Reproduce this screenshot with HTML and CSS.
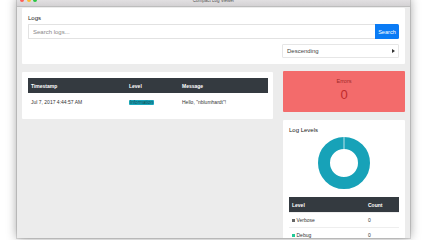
FILE: index.html
```html
<!DOCTYPE html>
<html>
<head>
<meta charset="utf-8">
<link rel="stylesheet" href="styles.css">
</head>
<body>
<div class="window">
  <div class="titlebar">
    <div class="lights"><span class="light red"></span><span class="light yellow"></span><span class="light green"></span></div>
    <div class="title">Compact Log Viewer</div>
  </div>
  <div class="content">
    <section class="card search-card">
      <h1 class="card-title">Logs</h1>
      <div class="search-row">
        <input class="search-input" type="text" placeholder="Search logs...">
        <button class="search-btn">Search</button>
      </div>
      <div class="sort-row">
        <div class="select"><span>Descending</span>
          <svg class="caret" width="3" height="4" viewBox="0 0 3 4"><path d="M0 0 L3 2 L0 4 Z" fill="#333"/></svg>
        </div>
      </div>
    </section>
    <div class="grid">
      <div class="col-main">
        <section class="card logs-card">
          <table class="table">
            <thead><tr><th class="c-ts">Timestamp</th><th class="c-lv">Level</th><th>Message</th></tr></thead>
            <tbody><tr><td>Jul 7, 2017 4:44:57 AM</td><td><span class="badge">Information</span></td><td>Hello, "nblumhardt"!</td></tr></tbody>
          </table>
        </section>
      </div>
      <div class="col-side">
        <section class="card errors-card">
          <div class="errors-label">Errors</div>
          <div class="errors-count">0</div>
        </section>
        <section class="card levels-card">
          <h2 class="card-title">Log Levels</h2>
          <div class="donut-wrap">
            <svg width="52" height="52" viewBox="0 0 52 52">
              <circle cx="26" cy="26" r="20" fill="none" stroke="#17a2b8" stroke-width="12"/>
              <line x1="26" y1="0" x2="26" y2="12" stroke="#fff" stroke-width="0.7"/>
            </svg>
          </div>
          <table class="table levels">
            <thead><tr><th class="c-level">Level</th><th>Count</th></tr></thead>
            <tbody>
              <tr><td><span class="sw sw-verbose"></span>Verbose</td><td>0</td></tr>
              <tr><td><span class="sw sw-debug"></span>Debug</td><td>0</td></tr>
            </tbody>
          </table>
        </section>
      </div>
    </div>
  </div>
</div>
</body>
</html>
```
FILE: styles.css
```css
html, body {
  margin: 0;
  padding: 0;
  background: #ffffff;
  overflow: hidden;
  width: 427px;
  height: 240px;
}
body {
  font-family: "Liberation Sans", Arial, sans-serif;
  color: #333;
}
.window {
  margin: -2px 0 0 17px;
  width: 393px;
  height: 240px;
  background: #ececec;
  box-shadow: 0 0 10px rgba(0,0,0,0.38), 0 0 0 1px rgba(0,0,0,0.12);
  overflow: hidden;
  display: flex;
  flex-direction: column;
}
.titlebar {
  height: 8px;
  flex: none;
  background: linear-gradient(#e6e4e6, #d4d2d4);
  border-bottom: 1px solid #bdbdbd;
  display: flex;
  align-items: flex-start;
}
.lights {
  display: flex;
  gap: 2.5px;
  padding: 0 0 0 3px;
}
.light {
  width: 4px;
  height: 4px;
  border-radius: 50%;
}
.red { background: #fc5f57; }
.yellow { background: #fdbc2e; }
.green { background: #29c641; }
.title {
  flex: 1;
  text-align: center;
  font-size: 4.5px;
  line-height: 6px;
  color: #555;
  margin-left: -20px;
}
.content {
  padding: 1px 5px 0 5px;
  display: flex;
  flex-direction: column;
}
.card {
  background: #fff;
  border-radius: 1px;
}
.card-title {
  margin: 0;
  font-size: 6px;
  font-weight: normal;
  color: #222;
  line-height: 8px;
}
.search-card {
  padding: 6px;
  display: flex;
  flex-direction: column;
}
.search-card .card-title {
  margin-bottom: 2px;
}
.search-row {
  display: flex;
  height: 15px;
}
.search-input {
  flex: 1;
  min-width: 0;
  height: 15px;
  box-sizing: border-box;
  border: 1px solid #e2e2e2;
  border-right: none;
  border-radius: 1px 0 0 1px;
  padding: 0 0 0 4px;
  font-family: inherit;
  font-size: 6px;
  outline: none;
  background: #fff;
}
.search-input::placeholder { color: #888; }
.search-btn {
  width: 24px;
  height: 15px;
  border: none;
  border-radius: 0 1.5px 1.5px 0;
  background: #0a7bf5;
  color: #fff;
  font-family: inherit;
  font-size: 5.6px;
  padding: 0;
}
.sort-row {
  display: flex;
  justify-content: flex-end;
  margin-top: 5px;
}
.select {
  width: 117px;
  height: 14px;
  box-sizing: border-box;
  border: 1px solid #e6e6e6;
  border-radius: 1px;
  display: flex;
  align-items: center;
  justify-content: space-between;
  padding: 0 3px 0 4px;
  font-size: 6px;
  color: #444;
}
.grid {
  display: grid;
  grid-template-columns: 251px 1fr;
  column-gap: 10px;
  margin-top: 7px;
  align-items: start;
}
.logs-card {
  margin-top: 1px;
  padding: 6px 5px 9px 6px;
}
.table {
  width: 100%;
  border-collapse: collapse;
  font-size: 5px;
}
.table th {
  background: #343a40;
  color: #fff;
  text-align: left;
  font-weight: bold;
  height: 15px;
  padding: 0 3px;
}
.table td {
  height: 17px;
  padding: 0 3px;
  color: #333;
  vertical-align: middle;
}
.c-ts { width: 92px; }
.c-lv { width: 47px; }
.badge {
  display: inline-block;
  background: #1ba6bb;
  color: #0a3d46;
  font-size: 4.6px;
  line-height: 5px;
  padding: 0 1px;
  border-radius: 1px;
}
.col-side {
  display: flex;
  flex-direction: column;
}
.errors-card {
  background: #f36b6b;
  height: 41px;
  display: flex;
  flex-direction: column;
  align-items: center;
  box-sizing: border-box;
  padding-top: 7px;
}
.errors-label {
  font-size: 5.5px;
  color: #9e2a2a;
  line-height: 6px;
}
.errors-count {
  font-size: 13px;
  line-height: 14px;
  color: #bf2a2c;
  margin-top: 4px;
}
.levels-card {
  margin-top: 8px;
  padding: 6px;
}
.donut-wrap {
  display: flex;
  justify-content: center;
  margin-top: 3px;
  margin-bottom: 8px;
}
.donut-wrap svg { display: block; }
.levels td { height: 14px; border-top: 1px solid #eee; }
.c-level { width: 70px; }
.sw {
  display: inline-block;
  width: 3px;
  height: 3px;
  margin-right: 1.5px;
  vertical-align: middle;
}
.sw-verbose { background: #666; }
.sw-debug { background: #20c997; }
```
